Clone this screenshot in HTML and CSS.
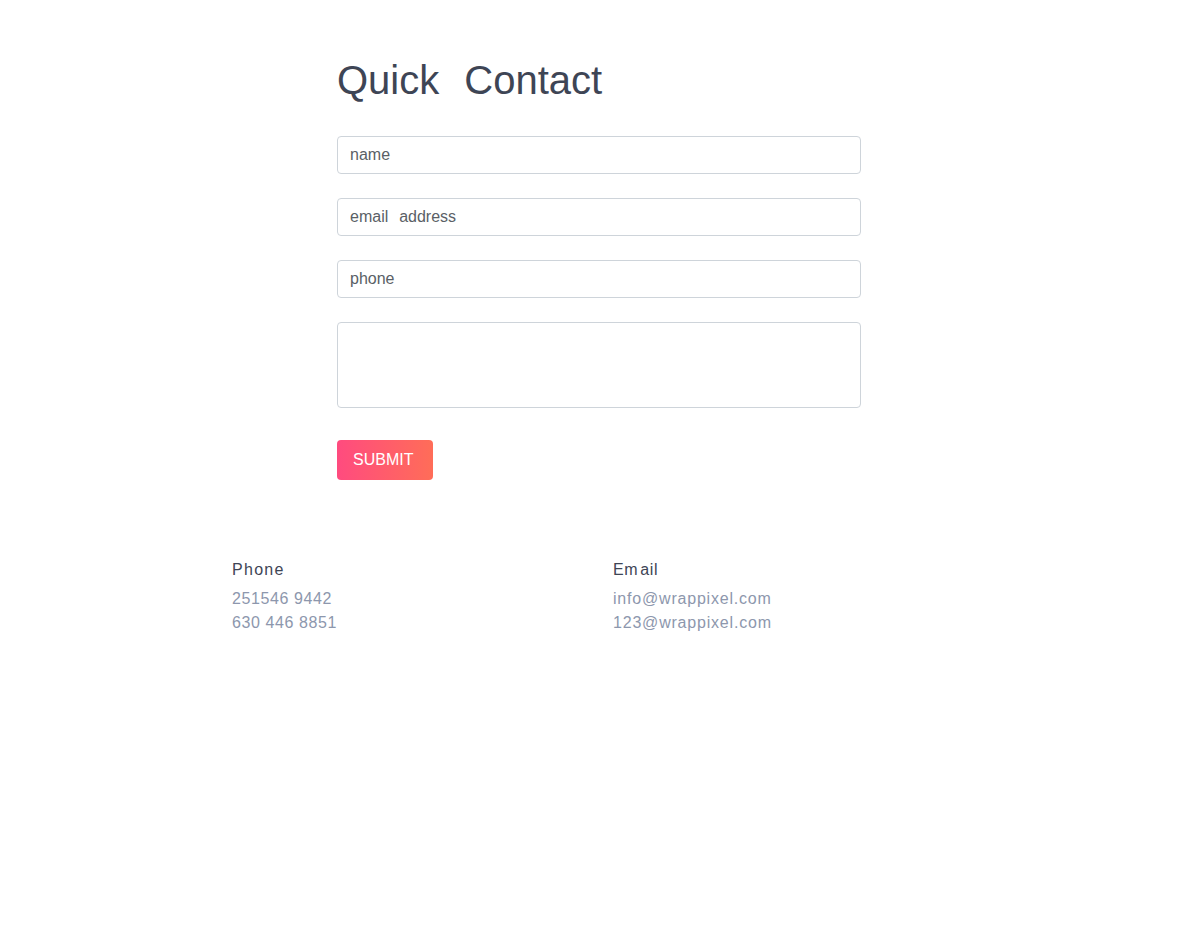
FILE: index.html
```html
<!DOCTYPE html>
<html>
<head>
<meta charset="utf-8">
<link rel="stylesheet" href="styles.css">
</head>
<body>
<div class="page">
  <section class="contact">
    <h1 class="title">Quick Contact</h1>
    <form class="form">
      <input class="field" type="text" placeholder="name">
      <input class="field" type="text" placeholder="email&nbsp;&nbsp;address">
      <input class="field" type="text" placeholder="phone">
      <textarea class="field area"></textarea>
      <button class="submit" type="button">SUBMIT</button>
    </form>
  </section>
  <section class="info">
    <div class="col">
      <h6 class="label">Phone</h6>
      <p class="value">251546 9442<br>630 446 8851</p>
    </div>
    <div class="col">
      <h6 class="label label-tight">Em ail</h6>
      <p class="value value-mail">info@wrappixel.com<br>123@wrappixel.com</p>
    </div>
  </section>
</div>
</body>
</html>
```
FILE: styles.css
```css
* { box-sizing: border-box; }
body {
  margin: 0;
  background: #fff;
  font-family: "Liberation Sans", Arial, sans-serif;
}
.page {
  width: 1200px;
  padding-top: 56px;
}
.contact {
  width: 524px;
  margin-left: 337px;
}
.title {
  margin: 0 0 32px 0;
  font-size: 40px;
  font-weight: 400;
  line-height: 48px;
  word-spacing: 14px;
  color: #3e4555;
}
.form {
  display: flex;
  flex-direction: column;
  gap: 24px;
}
.field {
  display: block;
  width: 524px;
  height: 38px;
  border: 1px solid #ced4da;
  border-radius: 4px;
  padding: 0 12px;
  font-family: "Liberation Sans", Arial, sans-serif;
  font-size: 16px;
  color: #495057;
  outline: none;
}
.field::placeholder {
  color: #5a5f66;
  word-spacing: 1px;
}
.area {
  height: 86px;
  resize: none;
}
.submit {
  align-self: flex-start;
  margin-top: 8px;
  width: 96px;
  height: 40px;
  border: 0;
  border-radius: 4px;
  padding: 0 0 0 16px;
  text-align: left;
  background: linear-gradient(to right, #ff4b7f, #ff6d58);
  color: #fff;
  font-family: "Liberation Sans", Arial, sans-serif;
  font-size: 16px;
}
.info {
  display: flex;
  margin-left: 232px;
  margin-top: 79px;
}
.col { width: 381px; }
.label {
  margin: 0 0 6px 0;
  font-size: 16px;
  font-weight: 400;
  line-height: 22px;
  letter-spacing: 1.3px;
  color: #3e4555;
}
.label-tight {
  letter-spacing: 0.6px;
  word-spacing: -3px;
}
.value {
  margin: 0;
  font-size: 16px;
  line-height: 24px;
  letter-spacing: 0.6px;
  color: #8d97ad;
}
.value-mail {
  letter-spacing: 0.8px;
}
```
